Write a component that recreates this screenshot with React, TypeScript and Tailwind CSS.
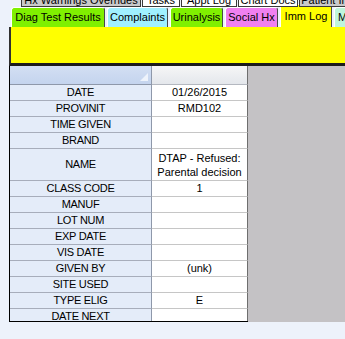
import React from "react";

const rows: { label: string; value: React.ReactNode; tall?: boolean }[] = [
  { label: "DATE", value: "01/26/2015" },
  { label: "PROVINIT", value: "RMD102" },
  { label: "TIME GIVEN", value: "" },
  { label: "BRAND", value: "" },
  {
    label: "NAME",
    value: (
      <span className="leading-[14px]">
        DTAP - Refused:
        <br />
        Parental decision
      </span>
    ),
    tall: true,
  },
  { label: "CLASS CODE", value: "1" },
  { label: "MANUF", value: "" },
  { label: "LOT NUM", value: "" },
  { label: "EXP DATE", value: "" },
  { label: "VIS DATE", value: "" },
  { label: "GIVEN BY", value: "(unk)" },
  { label: "SITE USED", value: "" },
  { label: "TYPE ELIG", value: "E" },
  { label: "DATE NEXT", value: "" },
];

function TopTab({ label, w, white }: { label: string; w: string; white?: boolean }) {
  return (
    <div
      className={`relative h-[7px] shrink-0 overflow-hidden border-b border-r border-l border-[#3a3a3a] ${w} ${
        white ? "bg-white" : "bg-[#c9c9c9]"
      }`}
    >
      <span className="absolute left-0 right-0 top-[-6px] whitespace-nowrap text-center text-[11px] leading-[13px]">
        {label}
      </span>
    </div>
  );
}

function Tab({ label, w, bg, sel }: { label: string; w: string; bg: string; sel?: boolean }) {
  return (
    <div
      className={`shrink-0 whitespace-nowrap rounded-t-[3px] border-l border-t border-white border-r-[#4a4a4a] border-r text-center text-[11px] ${w} ${bg} ${
        sel ? "h-[23px] leading-[22px]" : "h-[20px] leading-[19px]"
      }`}
    >
      {label}
    </div>
  );
}

export default function App() {
  return (
    <div className="h-[339px] w-[345px] overflow-hidden bg-[#edf2fb] font-['Liberation_Sans',Arial,sans-serif] text-black">
      {/* cut-off top tab row */}
      <div className="flex h-[7px] pl-[21px] gap-[1px]">
        <TopTab label="Hx Warnings Overrides" w="w-[120px]" />
        <TopTab label="Tasks" w="w-[38px]" white />
        <TopTab label="Appt Log" w="w-[56px]" white />
        <TopTab label="Chart Docs" w="w-[60px]" white />
        <TopTab label="Patient Info" w="w-[60px]" />
      </div>
      {/* tab row */}
      <div className="flex h-[20px] items-end gap-[2px] pl-[11px]">
        <Tab label="Diag Test Results" w="w-[94px]" bg="bg-[#80f000]" />
        <Tab label="Complaints" w="w-[61px]" bg="bg-[#a0f0ff]" />
        <Tab label="Urinalysis" w="w-[53px]" bg="bg-[#80f000]" />
        <Tab label="Social Hx" w="w-[53px]" bg="bg-[#f080f0]" />
        <Tab label="Imm Log" w="w-[52px]" bg="bg-[#ffff00]" sel />
        <div className="h-[20px] w-[20px] shrink-0 rounded-t-[3px] border-l border-t border-white bg-[#bff5dc] pl-[3px] text-[11px] leading-[19px]">
          M
        </div>
      </div>
      {/* yellow panel */}
      <div className="ml-[9px] h-[39px] border-b-[3px] border-l-2 border-b-[#1c1c1c] border-l-[#303030] bg-[#ffff00]" />
      {/* grid */}
      <div className="ml-[9px] flex h-[256px] border-l border-black">
        <div className="h-full w-[238px] shrink-0 overflow-hidden border-b border-black">
          <div className="flex h-[19px]">
            <div className="relative h-full w-[142px] border-b border-r border-[#8e98aa] bg-gradient-to-b from-[#d3dff3] to-[#c4d4ee]">
              <div className="absolute right-[3px] top-[7px] h-0 w-0 border-b-[8px] border-l-[8px] border-b-[#eef3fb] border-l-transparent" />
            </div>
            <div className="h-full w-[96px] border-b border-r border-b-[#b4b8c0] border-r-[#6e6e6e] bg-gradient-to-b from-[#f6f6f6] to-[#e4e7ec]" />
          </div>
          {rows.map((r) => (
            <div key={r.label} className={`flex ${r.tall ? "h-[32px]" : "h-[16px]"}`}>
              <div className="flex h-full w-[142px] items-center justify-center border-b border-r border-b-[#a7adbb] border-r-[#8e98aa] bg-[#e4ecf9] text-[11px] tracking-[-0.3px]">
                {r.label}
              </div>
              <div className="flex h-full w-[96px] items-center justify-center border-b border-r border-b-[#c6c6c6] border-r-[#6e6e6e] bg-white text-center text-[11px]">
                {r.value}
              </div>
            </div>
          ))}
        </div>
        <div className="h-full flex-1 bg-[#c4c2c5]" />
      </div>
    </div>
  );
}
